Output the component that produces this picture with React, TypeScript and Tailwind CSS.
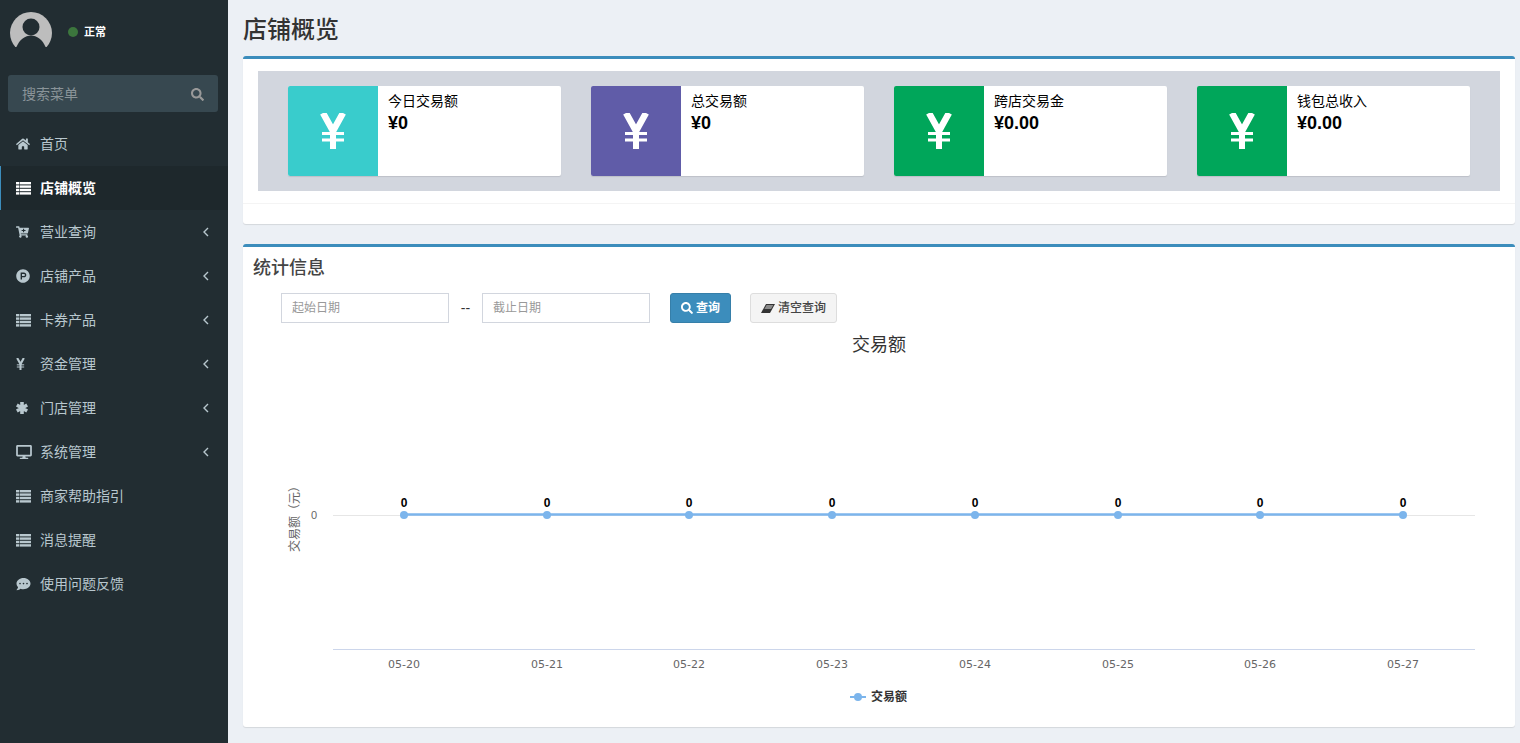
import type { ReactNode } from "react"
import { FaCartPlus, FaCommentDots, FaDesktop, FaHome, FaProductHunt, FaSearch } from "react-icons/fa"

function ListIcon() {
  return (
    <svg viewBox="0 0 15 13" className="h-[13px] w-[15px]" fill="currentColor">
      {[0, 3.4, 6.8, 10.2].map((y) => (
        <g key={y}>
          <rect x="0" y={y} width="3" height="2.4" />
          <rect x="3.6" y={y} width="11.4" height="2.4" />
        </g>
      ))}
    </svg>
  )
}

function YenIcon({ className }: { className: string }) {
  return (
    <svg viewBox="0 0 26 36" className={className} fill="none" stroke="currentColor">
      <path d="M3 0l10 18L23 0" strokeWidth="6.5" />
      <path d="M13 17v19" strokeWidth="6" />
      <path d="M2 20.5h22M2 27h22" strokeWidth="3" />
    </svg>
  )
}

function AsteriskIcon() {
  return (
    <svg viewBox="0 0 12 12" className="h-[12px] w-[12px]" stroke="currentColor" strokeWidth="3.6">
      <path d="M6 0v12M.8 3l10.4 6M.8 9l10.4-6" />
    </svg>
  )
}

function ArrowIcon() {
  return (
    <svg viewBox="0 0 6 10" className="h-[10px] w-[6px]" fill="none" stroke="currentColor" strokeWidth="1.4">
      <path d="M5 1L1 5l4 4" />
    </svg>
  )
}

function EraserIcon() {
  return (
    <svg viewBox="0 0 14 9" className="h-[9px] w-[14px]">
      <path d="M5 0h9l-5 9H0z" fill="#333333" />
      <path d="M5.6 1h6.8L10 5H3.4z" fill="#8a8a8a" />
    </svg>
  )
}

const menu: { label: string; icon: ReactNode; arrow?: boolean; active?: boolean }[] = [
  { label: "首页", icon: <FaHome className="h-[14px] w-[14px]" /> },
  { label: "店铺概览", icon: <ListIcon />, active: true },
  { label: "营业查询", icon: <FaCartPlus className="h-[12px] w-[13px]" />, arrow: true },
  { label: "店铺产品", icon: <FaProductHunt className="h-[14px] w-[14px]" />, arrow: true },
  { label: "卡券产品", icon: <ListIcon />, arrow: true },
  { label: "资金管理", icon: <YenIcon className="h-[12px] w-[9px]" />, arrow: true },
  { label: "门店管理", icon: <AsteriskIcon />, arrow: true },
  { label: "系统管理", icon: <FaDesktop className="h-[14px] w-[16px]" />, arrow: true },
  { label: "商家帮助指引", icon: <ListIcon /> },
  { label: "消息提醒", icon: <ListIcon /> },
  { label: "使用问题反馈", icon: <FaCommentDots className="h-[14px] w-[15px]" /> },
]

const stats = [
  { label: "今日交易额", value: "¥0", color: "bg-[#39cccc]" },
  { label: "总交易额", value: "¥0", color: "bg-[#605ca8]" },
  { label: "跨店交易金", value: "¥0.00", color: "bg-[#00a65a]" },
  { label: "钱包总收入", value: "¥0.00", color: "bg-[#00a65a]" },
]

const days = ["05-20", "05-21", "05-22", "05-23", "05-24", "05-25", "05-26", "05-27"]
const pointX = [404, 547, 689, 832, 975, 1118, 1260, 1403]

function Sidebar() {
  return (
    <aside className="w-[228px] shrink-0 bg-[#222d32]">
      <div className="flex h-[75px] items-start pl-[10px] pt-[12px]">
        <svg viewBox="0 0 42 35" className="h-[35px] w-[42px]">
          <circle cx="21" cy="21" r="21" fill="#bdbdbd" />
          <circle cx="21" cy="15" r="8.5" fill="#222d32" />
          <path d="M6 36C9 28 15 23.5 21 23.5S33 28 36 36z" fill="#222d32" />
        </svg>
        <span className="ml-[16px] mt-[15px] h-[10px] w-[10px] rounded-full bg-[#3c763d]" />
        <span className="ml-[6px] mt-[13px] text-[11px] font-bold leading-[14px] text-white">正常</span>
      </div>
      <div className="ml-[8px] mr-[10px] flex h-[37px] items-center justify-between rounded-[3px] bg-[#374850] pl-[14px] pr-[14px] pt-[1px]">
        <span className="text-[14px] text-[#8a9499]">搜索菜单</span>
        <FaSearch className="h-[13px] w-[13px] text-[#999999]" />
      </div>
      <ul className="mt-[10px]">
        {menu.map((item) => (
          <li
            key={item.label}
            className={`flex h-[44px] items-center border-l-[1px] pl-[15px] pr-[19px] text-[14px] ${
              item.active
                ? "border-[#3c8dbc] bg-[#1e282c] font-bold text-white"
                : "border-transparent text-[#b8c7ce]"
            }`}
          >
            <span className="flex w-[24px] shrink-0 items-center">{item.icon}</span>
            <span className="flex-1">{item.label}</span>
            {item.arrow && <ArrowIcon />}
          </li>
        ))}
      </ul>
    </aside>
  )
}

function StatCard({ label, value, color }: { label: string; value: string; color: string }) {
  return (
    <div className="flex h-[90px] overflow-hidden rounded-[2px] bg-white shadow-[0_1px_1px_rgba(0,0,0,0.1)]">
      <div className={`flex w-[90px] shrink-0 items-center justify-center ${color}`}>
        <YenIcon className="h-[36px] w-[26px] text-white" />
      </div>
      <div className="pl-[10px] pt-[5px] text-black">
        <div className="text-[14px] leading-[20px]">{label}</div>
        <div className="text-[18px] font-bold leading-[24px]">{value}</div>
      </div>
    </div>
  )
}

function Chart() {
  return (
    <svg viewBox="243 330 1272 397" className="block h-[397px] w-full">
      <text x="879" y="351" textAnchor="middle" fontSize="18" fill="#333333">交易额</text>
      <text
        transform="rotate(-90 295 516)"
        x="295"
        y="520"
        textAnchor="middle"
        fontSize="12"
        fill="#666666"
      >
        交易额（元）
      </text>
      <text x="314" y="519" textAnchor="middle" fontSize="11" fill="#666666">0</text>
      <line x1="333" x2="1475" y1="515.5" y2="515.5" stroke="#e6e6e6" />
      <line x1="333" x2="1475" y1="649.5" y2="649.5" stroke="#ccd6eb" />
      <line x1="404" x2="1403" y1="514.5" y2="514.5" stroke="#7cb5ec" strokeWidth="2.5" />
      {pointX.map((x, i) => (
        <g key={days[i]}>
          <circle cx={x} cy="515" r="4" fill="#7cb5ec" />
          <text x={x} y="507" textAnchor="middle" fontSize="12" fontWeight="700" fill="#000000">0</text>
          <text
            x={x}
            y="668"
            textAnchor="middle"
            fontSize="11"
            fontFamily="'DejaVu Sans', sans-serif"
            fill="#666666"
          >
            {days[i]}
          </text>
        </g>
      ))}
      <line x1="850" x2="866" y1="697" y2="697" stroke="#7cb5ec" strokeWidth="2" />
      <circle cx="858" cy="697" r="4" fill="#7cb5ec" />
      <text x="871" y="701" fontSize="12" fontWeight="700" fill="#333333">交易额</text>
    </svg>
  )
}

export default function App() {
  return (
    <div className="flex h-[743px] overflow-hidden bg-[#ecf0f5] font-['Liberation_Sans','Noto_Sans_CJK_SC',sans-serif] text-[#333333]">
      <Sidebar />
      <main className="min-w-0 flex-1 pl-[15px] pr-[5px]">
        <h1 className="flex h-[56px] items-center pt-[4px] text-[24px] font-medium leading-[26px]">店铺概览</h1>

        <section className="h-[168px] rounded-[3px] border-t-[3px] border-[#3c8dbc] bg-white shadow-[0_1px_1px_rgba(0,0,0,0.1)]">
          <div className="px-[15px] pt-[12px]">
            <div className="grid h-[120px] grid-cols-4 items-center gap-[30px] bg-[#d2d6de] px-[30px]">
              {stats.map((stat) => (
                <StatCard key={stat.label} {...stat} />
              ))}
            </div>
          </div>
          <div className="mt-[12px] border-t border-[#f4f4f4]" />
        </section>

        <section className="mt-[20px] h-[483px] rounded-[3px] border-t-[3px] border-[#3c8dbc] bg-white shadow-[0_1px_1px_rgba(0,0,0,0.1)]">
          <h3 className="pl-[10px] pt-[11px] text-[18px] font-medium leading-[20px] text-[#444444]">统计信息</h3>
          <div className="mt-[15px] flex items-center pl-[38px]">
            <div className="flex h-[30px] w-[168px] items-center border border-[#d2d6de] pl-[10px] text-[12px] text-[#999999]">
              起始日期
            </div>
            <span className="w-[33px] text-center text-[14px]">--</span>
            <div className="flex h-[30px] w-[168px] items-center border border-[#d2d6de] pl-[10px] text-[12px] text-[#999999]">
              截止日期
            </div>
            <button className="ml-[20px] flex h-[30px] w-[61px] items-center justify-center gap-[3px] rounded-[3px] border border-[#367fa9] bg-[#3c8dbc] text-[12px] font-bold text-white">
              <FaSearch className="h-[12px] w-[12px]" />
              查询
            </button>
            <button className="ml-[19px] flex h-[30px] w-[87px] items-center justify-center gap-[3px] rounded-[3px] border border-[#dddddd] bg-[#f4f4f4] text-[12px] font-medium text-[#444444]">
              <EraserIcon />
              清空查询
            </button>
          </div>
          <div className="mt-[7px]">
            <Chart />
          </div>
        </section>
      </main>
    </div>
  )
}
